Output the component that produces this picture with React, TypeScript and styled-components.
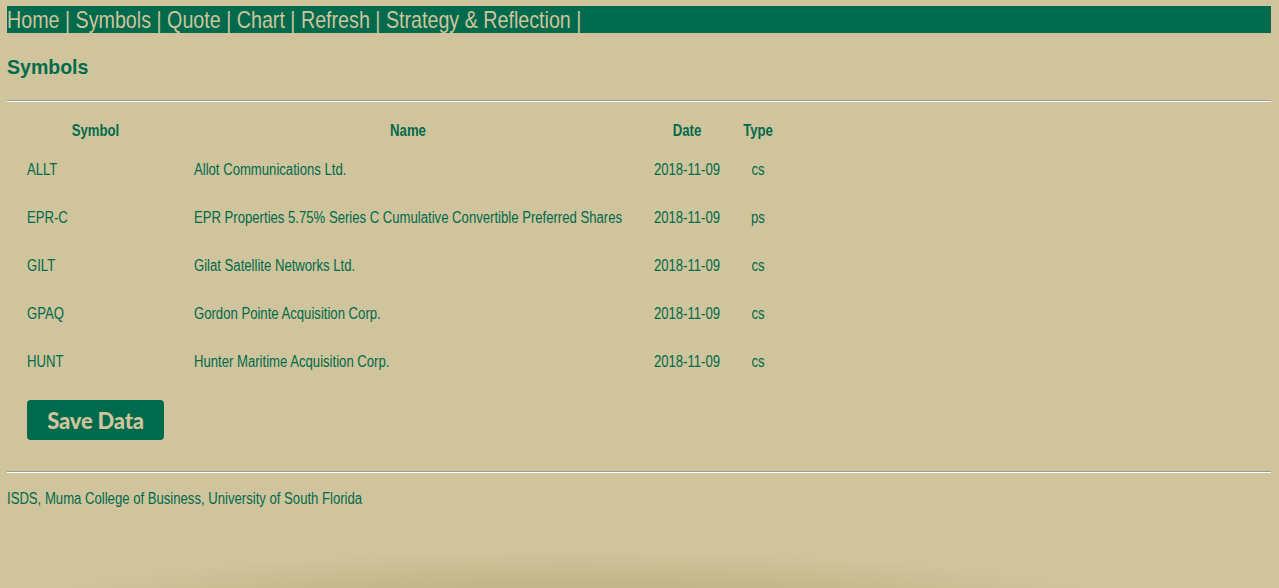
import React from "react";
import styled, { createGlobalStyle } from "styled-components";

const GREEN = "#006a4d";
const GOLD = "#cfc49b";
const NARROW = 0.82;

const Global = createGlobalStyle`
  html, body { margin: 0; padding: 0; }
  body {
    background: ${GOLD};
    font-family: "Liberation Sans", Arial, sans-serif;
    color: ${GREEN};
    min-height: 588px;
    overflow: hidden;
  }
`;

const Page = styled.div`
  padding: 6px 8px 0 7px;
  min-height: 582px;
  background: radial-gradient(ellipse 560px 60px at 575px 610px, rgba(170,155,110,0.55), rgba(170,155,110,0.25) 60%, rgba(170,155,110,0) 100%);
`;

const Nav = styled.nav`
  background: ${GREEN};
  height: 27px;
  font-size: 24px;
  line-height: 27px;
  color: ${GOLD};
  white-space: pre;
  overflow: hidden;
`;

const Condensed = styled.div<{ $scale: number }>`
  transform: scaleX(${(p) => p.$scale});
  transform-origin: left center;
  width: max-content;
`;

const NavLink = styled.a`
  color: ${GOLD};
  text-decoration: none;
`;

const Title = styled.h2`
  font-size: 21px;
  font-weight: bold;
  margin: 20px 0 0;
  line-height: 28px;
`;

const Rule = styled.hr<{ $top: number }>`
  margin: ${(p) => p.$top}px 0 0;
  border: 0;
  border-top: 1px solid #9a9a9a;
  border-bottom: 1px solid #fff;
  height: 0;
`;

const Table = styled.table`
  border-collapse: collapse;
  margin-top: 14px;
  font-size: 16px;
  table-layout: fixed;
`;

const Th = styled.th<{ $w: number }>`
  width: ${(p) => p.$w / NARROW}px;
  font-weight: bold;
  text-align: center;
  padding: 0;
  height: 30px;
`;

const Td = styled.td<{ $align?: string; $pl?: number }>`
  text-align: ${(p) => p.$align || "center"};
  padding: 0 0 0 ${(p) => (p.$pl || 0) / NARROW}px;
  height: 48px;
  white-space: nowrap;
`;

const Button = styled.button`
  display: block;
  margin: 14px 0 0 20px;
  width: 137px;
  height: 40px;
  padding: 0;
  border: 0;
  border-radius: 4px;
  background: ${GREEN};
  color: ${GOLD};
  font-family: "Lato", "Open Sans", sans-serif;
  font-weight: 900;
  font-size: 22px;
  letter-spacing: -0.2px;
  cursor: pointer;
`;

const Footer = styled.p`
  margin: 17px 0 0;
  font-size: 16px;
  line-height: 18px;
`;

const links = ["Home", "Symbols", "Quote", "Chart", "Refresh", "Strategy & Reflection"];

const rows = [
  ["ALLT", "Allot Communications Ltd.", "2018-11-09", "cs"],
  ["EPR-C", "EPR Properties 5.75% Series C Cumulative Convertible Preferred Shares", "2018-11-09", "ps"],
  ["GILT", "Gilat Satellite Networks Ltd.", "2018-11-09", "cs"],
  ["GPAQ", "Gordon Pointe Acquisition Corp.", "2018-11-09", "cs"],
  ["HUNT", "Hunter Maritime Acquisition Corp.", "2018-11-09", "cs"],
];

export default function App() {
  return (
    <>
      <Global />
      <Page>
        <Nav>
          <Condensed $scale={NARROW}>
            {links.map((l) => (
              <React.Fragment key={l}>
                <NavLink href="#">{l}</NavLink>
                {" | "}
              </React.Fragment>
            ))}
          </Condensed>
        </Nav>
        <Condensed $scale={0.93}>
          <Title>Symbols</Title>
        </Condensed>
        <Rule $top={19} />
        <Condensed $scale={NARROW}>
          <Table>
            <thead>
              <tr>
                <Th $w={177}>Symbol</Th>
                <Th $w={448}>Name</Th>
                <Th $w={110}>Date</Th>
                <Th $w={32}>Type</Th>
              </tr>
            </thead>
            <tbody>
              {rows.map((r) => (
                <tr key={r[0]}>
                  <Td $align="left" $pl={20}>{r[0]}</Td>
                  <Td $align="left" $pl={10}>{r[1]}</Td>
                  <Td>{r[2]}</Td>
                  <Td>{r[3]}</Td>
                </tr>
              ))}
            </tbody>
          </Table>
        </Condensed>
        <Button>Save Data</Button>
        <Rule $top={31} />
        <Condensed $scale={NARROW}>
          <Footer>ISDS, Muma College of Business, University of South Florida</Footer>
        </Condensed>
      </Page>
    </>
  );
}
